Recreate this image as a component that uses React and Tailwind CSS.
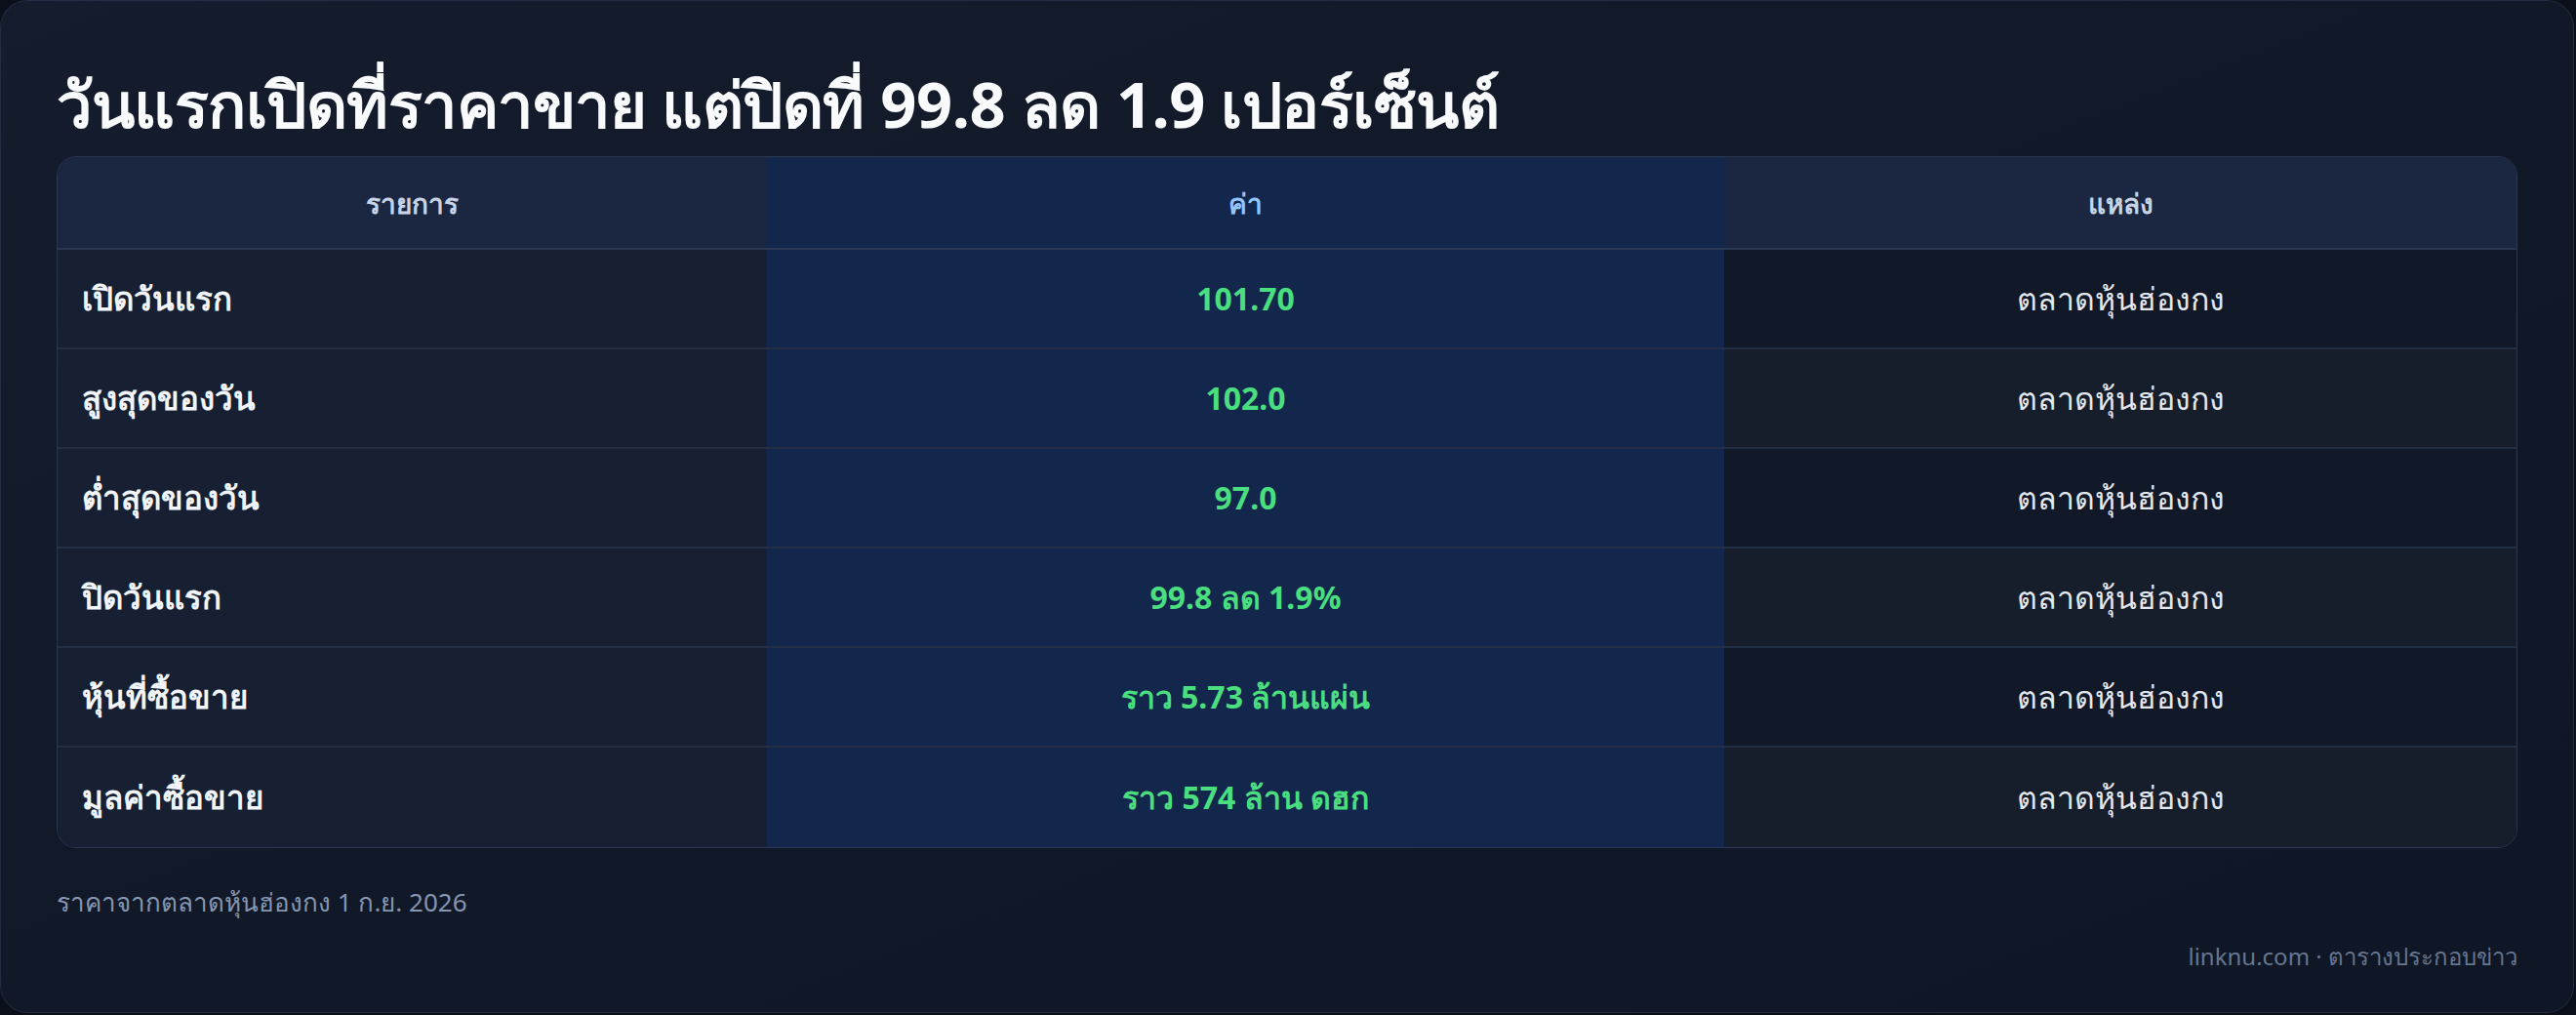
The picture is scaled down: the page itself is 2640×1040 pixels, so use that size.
const rows = [
  { label: 'เปิดวันแรก', value: '101.70', source: 'ตลาดหุ้นฮ่องกง' },
  { label: 'สูงสุดของวัน', value: '102.0', source: 'ตลาดหุ้นฮ่องกง' },
  { label: 'ต่ำสุดของวัน', value: '97.0', source: 'ตลาดหุ้นฮ่องกง' },
  { label: 'ปิดวันแรก', value: '99.8 ลด 1.9%', source: 'ตลาดหุ้นฮ่องกง' },
  { label: 'หุ้นที่ซื้อขาย', value: 'ราว 5.73 ล้านแผ่น', source: 'ตลาดหุ้นฮ่องกง' },
  { label: 'มูลค่าซื้อขาย', value: 'ราว 574 ล้าน ดฮก', source: 'ตลาดหุ้นฮ่องกง' }
];

export default function App() {
  return (
    <div className="h-[1040px] w-[2640px] bg-[#0b0f19] font-['Noto_Sans',sans-serif]">
      <div className="flex h-[1038px] w-[2638px] flex-col rounded-[28px] border border-[#222c42] bg-gradient-to-br from-[#151c2d] via-[#111827] to-[#0f1625] px-[57px] pt-[55px]">
        <h1 className="h-[104px] text-[65px] font-bold leading-[100px] tracking-[-0.5px] text-[#f8fafc]">
          วันแรกเปิดที่ราคาขาย แต่ปิดที่ 99.8 ลด 1.9 เปอร์เซ็นต์
        </h1>

        <div className="overflow-hidden rounded-[20px] border border-[#2a3750]">
          <div className="grid h-[95px] grid-cols-[727px_981px_1fr] border-b-2 border-[#2a3750] text-[28px] font-semibold">
            <div className="flex items-center justify-center bg-[#1b2740] text-[#c8d3e6]">รายการ</div>
            <div className="flex items-center justify-center bg-[#13264c] text-[#93c5fd]">ค่า</div>
            <div className="flex items-center justify-center bg-[#1b2740] text-[#c8d3e6]">แหล่ง</div>
          </div>
          {rows.map((row, i) => (
            <div
              key={row.label}
              className={`grid h-[102px] grid-cols-[727px_981px_1fr] ${i < rows.length - 1 ? 'border-b-2 border-[#232f45]' : ''}`}
            >
              <div className="flex items-center bg-[#162032] pl-[25px] text-[33px] font-bold text-[#f1f5f9]">
                {row.label}
              </div>
              <div className="flex items-center justify-center bg-[#13264b] text-[32px] font-bold text-[#4ade80]">
                {row.value}
              </div>
              <div
                className={`flex items-center justify-center text-[32px] text-[#e2e8f0] ${i % 2 === 0 ? 'bg-[#111827]' : 'bg-[#161e2c]'}`}
              >
                {row.source}
              </div>
            </div>
          ))}
        </div>

        <p className="mt-[37px] text-[26px] leading-[36px] text-[#8596b0]">ราคาจากตลาดหุ้นฮ่องกง 1 ก.ย. 2026</p>
        <p className="mt-[20px] text-right text-[24px] leading-[36px] text-[#66768f]">linknu.com · ตารางประกอบข่าว</p>
      </div>
    </div>
  );
}
